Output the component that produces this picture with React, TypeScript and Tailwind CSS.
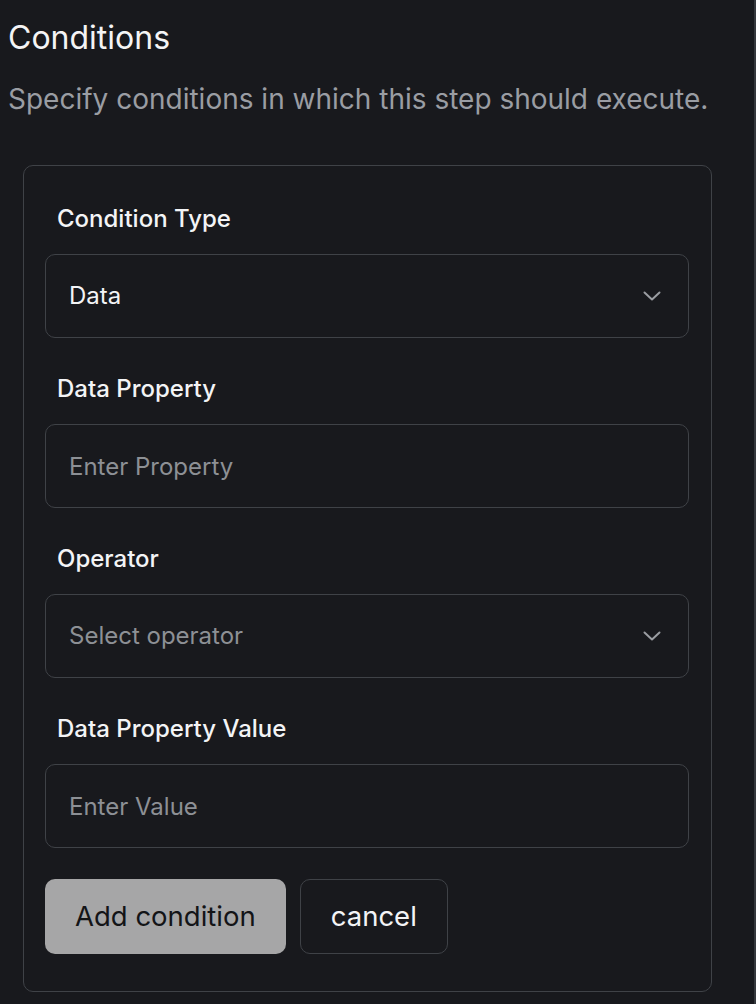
import React from 'react';

const Chevron: React.FC = () => (
  <svg width="18" height="10" viewBox="0 0 18 10" fill="none" className="shrink-0">
    <path d="M1.5 1.5 L9 8.5 L16.5 1.5" stroke="#9a9da2" strokeWidth="2" strokeLinecap="round" strokeLinejoin="round" />
  </svg>
);

const Field: React.FC<{ label: string; children: React.ReactNode }> = ({ label, children }) => (
  <div className="flex flex-col">
    <label className="h-8 flex items-center pl-3 text-[24px] font-medium text-[#f3f4f6]">{label}</label>
    <div className="mt-[19px]">{children}</div>
  </div>
);

const boxCls =
  'w-full h-[84px] rounded-[10px] border border-[#3f4247] bg-[#18191d] pl-[23px] pr-[27px] text-[24px] flex items-center justify-between';

export default function App() {
  return (
    <div className="min-h-screen w-[756px] bg-[#18191d] border-r-2 border-[#34373c]" style={{ fontFamily: 'Inter, "Noto Sans", sans-serif' }}>
      <div className="px-2 pt-[18px]">
        <h1 className="text-[32px] font-normal text-[#f4f4f5] leading-[40px]">Conditions</h1>
        <p className="mt-[24px] text-[28px] text-[#9a9da3] leading-[34px]">
          Specify conditions in which this step should execute.
        </p>
      </div>

      <div className="ml-[23px] mt-[49px] w-[689px] rounded-[10px] border border-[#3f4247] pl-[21px] pr-[22px] pt-[37px] pb-[37px]">
        <div className="flex flex-col gap-[35px]">
          <Field label="Condition Type">
            <div className={boxCls}>
              <span className="text-[#f3f4f6]">Data</span>
              <Chevron />
            </div>
          </Field>
          <Field label="Data Property">
            <input
              className={boxCls + ' outline-none text-[#f3f4f6] placeholder:text-[#8d9095]'}
              placeholder="Enter Property"
            />
          </Field>
          <Field label="Operator">
            <div className={boxCls}>
              <span className="text-[#8d9095]">Select operator</span>
              <Chevron />
            </div>
          </Field>
          <Field label="Data Property Value">
            <input
              className={boxCls + ' outline-none text-[#f3f4f6] placeholder:text-[#8d9095]'}
              placeholder="Enter Value"
            />
          </Field>
        </div>

        <div className="mt-[31px] flex gap-[14px]">
          <button className="h-[75px] rounded-[10px] bg-[#a6a6a7] px-[30px] text-[27.5px] text-[#131417]">
            Add condition
          </button>
          <button className="h-[75px] rounded-[10px] border border-[#3f4247] px-[30px] text-[27.5px] text-[#f3f4f6]">
            cancel
          </button>
        </div>
      </div>
    </div>
  );
}
